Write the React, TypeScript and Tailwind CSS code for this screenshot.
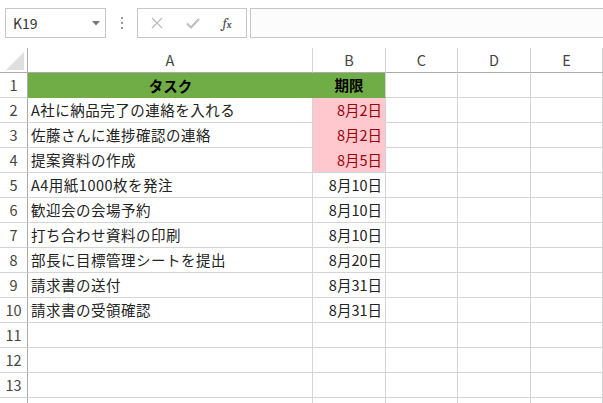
import React from "react";

const cols = ["A", "B", "C", "D", "E"];

type Row = { task: string; due: string; alert?: boolean };

const rows: Row[] = [
  { task: "A社に納品完了の連絡を入れる", due: "8月2日", alert: true },
  { task: "佐藤さんに進捗確認の連絡", due: "8月2日", alert: true },
  { task: "提案資料の作成", due: "8月5日", alert: true },
  { task: "A4用紙1000枚を発注", due: "8月10日" },
  { task: "歓迎会の会場予約", due: "8月10日" },
  { task: "打ち合わせ資料の印刷", due: "8月10日" },
  { task: "部長に目標管理シートを提出", due: "8月20日" },
  { task: "請求書の送付", due: "8月31日" },
  { task: "請求書の受領確認", due: "8月31日" },
];

const grid = "grid grid-cols-[28px_285px_73px_72px_73px_72px]";

function RowHead({ n }: { n?: number }) {
  return (
    <div className="h-[25px] border-r border-b border-r-[#ababab] border-b-[#d4d4d4] flex items-center justify-center text-[#444]">
      {n}
    </div>
  );
}

function Blank() {
  return <div className="h-[25px] border-r border-b border-[#d4d4d4]" />;
}

export default function App() {
  return (
    <div
      className="w-[603px] h-[403px] overflow-hidden bg-white text-[14.5px] text-[#222]"
      style={{ fontFamily: '"Noto Sans CJK JP", "Noto Sans", sans-serif' }}
    >
      {/* Formula bar */}
      <div className="h-[48px] flex items-start pt-[8px] pl-[5px]">
        <div className="w-[101px] h-[30px] border border-[#c6c6c6] flex items-center justify-between pl-[7px] pr-[5px]">
          <span className="text-[#333] text-[14px]">K19</span>
          <svg width="8" height="5" viewBox="0 0 8 5">
            <path d="M0 0h8L4 4.5z" fill="#777" />
          </svg>
        </div>
        <div className="w-[31px] h-[30px] flex flex-col items-center justify-center gap-[3px]">
          <span className="w-[2px] h-[2px] bg-[#999]" />
          <span className="w-[2px] h-[2px] bg-[#999]" />
          <span className="w-[2px] h-[2px] bg-[#999]" />
        </div>
        <div className="w-[110px] h-[30px] border border-[#c6c6c6] flex items-center">
          <div className="w-[38px] flex justify-center">
            <svg width="12" height="12" viewBox="0 0 12 12">
              <path d="M1 1l10 10M11 1L1 11" stroke="#bdbdbd" strokeWidth="1.3" />
            </svg>
          </div>
          <div className="w-[34px] flex justify-center">
            <svg width="14" height="11" viewBox="0 0 14 11">
              <path d="M1 5.5l4 4L13 1" stroke="#bdbdbd" strokeWidth="2" fill="none" />
            </svg>
          </div>
          <div className="w-[34px] flex justify-center items-baseline text-[#555] italic font-serif leading-none">
            <span className="text-[15px]">f</span>
            <span className="text-[10px] font-bold">x</span>
          </div>
        </div>
        <div className="ml-[3px] flex-1 h-[30px] border border-r-0 border-[#c6c6c6] bg-[#fcfcfc]" />
      </div>

      {/* Column headers */}
      <div className={grid}>
        <div className="h-[25px] border-r border-b border-[#ababab] flex items-end justify-end pr-[3px] pb-[2px]">
          <svg width="18" height="18" viewBox="0 0 18 18">
            <path d="M18 0V18H0z" fill="#dfdfdf" />
          </svg>
        </div>
        {cols.map((c) => (
          <div
            key={c}
            className="h-[25px] border-r border-b border-r-[#d4d4d4] border-b-[#ababab] flex items-center justify-center text-[#444]"
          >
            {c}
          </div>
        ))}

        {/* Row 1 */}
        <RowHead n={1} />
        <div className="h-[25px] bg-[#70ad47] flex items-center justify-center font-bold text-black">
          タスク
        </div>
        <div className="h-[25px] border-r border-r-[#d4d4d4] border-b border-b-[#70ad47] bg-[#70ad47] flex items-center justify-center font-bold text-black">
          期限
        </div>
        <Blank />
        <Blank />
        <Blank />

        {rows.map((r, i) => (
          <React.Fragment key={i}>
            <RowHead n={i + 2} />
            <div className="h-[25px] border-r border-b border-[#d4d4d4] flex items-center pl-[3px] whitespace-nowrap tracking-[0.5px]">
              {r.task}
            </div>
            {r.alert ? (
              <div
                className={
                  "h-[25px] bg-[#ffc7ce] text-[#9c0006] flex items-center justify-end pr-[3px] border-r border-r-[#d4d4d4] border-b " +
                  (i === 2 ? "border-b-[#d4d4d4]" : "border-b-[#ffc7ce]")
                }
              >
                {r.due}
              </div>
            ) : (
              <div className="h-[25px] border-r border-b border-[#d4d4d4] flex items-center justify-end pr-[3px]">
                {r.due}
              </div>
            )}
            <Blank />
            <Blank />
            <Blank />
          </React.Fragment>
        ))}

        {[11, 12, 13].map((n) => (
          <React.Fragment key={n}>
            <RowHead n={n} />
            <Blank />
            <Blank />
            <Blank />
            <Blank />
            <Blank />
          </React.Fragment>
        ))}
        <RowHead />
        <Blank />
        <Blank />
        <Blank />
        <Blank />
        <Blank />
      </div>
    </div>
  );
}
